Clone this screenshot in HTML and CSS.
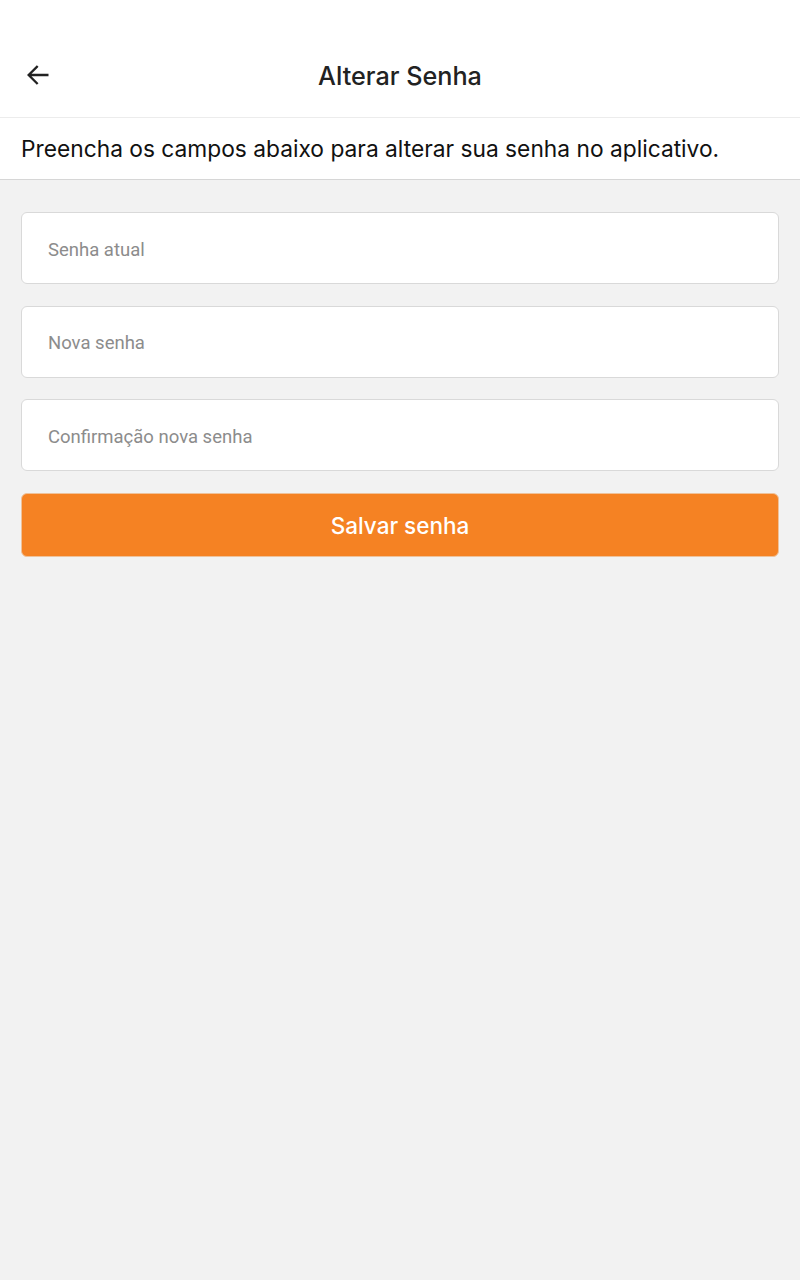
FILE: index.html
```html
<!DOCTYPE html>
<html lang="pt-br">

<head>
    <meta charset="UTF-8">
    <meta name="viewport" content="width=device-width, initial-scale=1.0">
    <title>Alterar Senha</title>
    <link rel="stylesheet" href="styles.css">
</head>

<body>
    <header class="topo">
        <button class="voltar" aria-label="Voltar">
            <svg width="28" height="28" viewBox="0 0 24 24">
                <path d="M20 12H5M11 5l-7 7 7 7" fill="none" stroke="#222" stroke-width="2" stroke-linecap="square"/>
            </svg>
        </button>
        <h1 class="titulo">Alterar Senha</h1>
    </header>

    <div class="descricao">
        <p>Preencha os campos abaixo para alterar sua senha no aplicativo.</p>
    </div>

    <main class="formulario">
        <input class="campo" type="password" placeholder="Senha atual">
        <input class="campo" type="password" placeholder="Nova senha">
        <input class="campo" type="password" placeholder="Confirmação nova senha">
        <button class="salvar">Salvar senha</button>
    </main>
</body>

</html>
```

FILE: styles.css
```css
html,
body {
    margin: 0;
    font-family: Inter, 'Noto Sans', sans-serif;
    background-color: #f2f2f2;
    min-height: 100%;
}

.topo {
    position: relative;
    height: 82px;
    padding-top: 35px;
    background-color: #fff;
    border-bottom: 1px solid #ececec;
    display: flex;
    align-items: center;
    justify-content: center;
}

.voltar {
    position: absolute;
    left: 24px;
    top: 61px;
    padding: 0;
    border: none;
    background: none;
    display: flex;
}

.titulo {
    margin: 0;
    font-size: 25.2px;
    font-weight: 500;
    color: #222;
}

.descricao {
    background-color: #fff;
    border-bottom: 1px solid #d6d6d6;
    height: 61px;
    padding: 0 21px;
    display: flex;
    align-items: center;
}

.descricao p {
    margin: 0;
    font-size: 22.75px;
    color: #111;
}

.formulario {
    padding: 32px 21px;
    display: flex;
    flex-direction: column;
    gap: 21.7px;
}

.campo {
    height: 72px;
    box-sizing: border-box;
    padding: 3px 26px 0;
    border: 1px solid #d9d9d9;
    border-radius: 6px;
    background-color: #fff;
    font-family: Roboto, sans-serif;
    font-size: 18.5px;
}

.campo::placeholder {
    color: #8c8c8c;
}

.salvar {
    height: 64px;
    border: 1px solid #efc29a;
    border-radius: 6px;
    background-color: #f58223;
    color: #fff;
    font-family: Inter, sans-serif;
    font-size: 22.5px;
    font-weight: 500;
}
```
